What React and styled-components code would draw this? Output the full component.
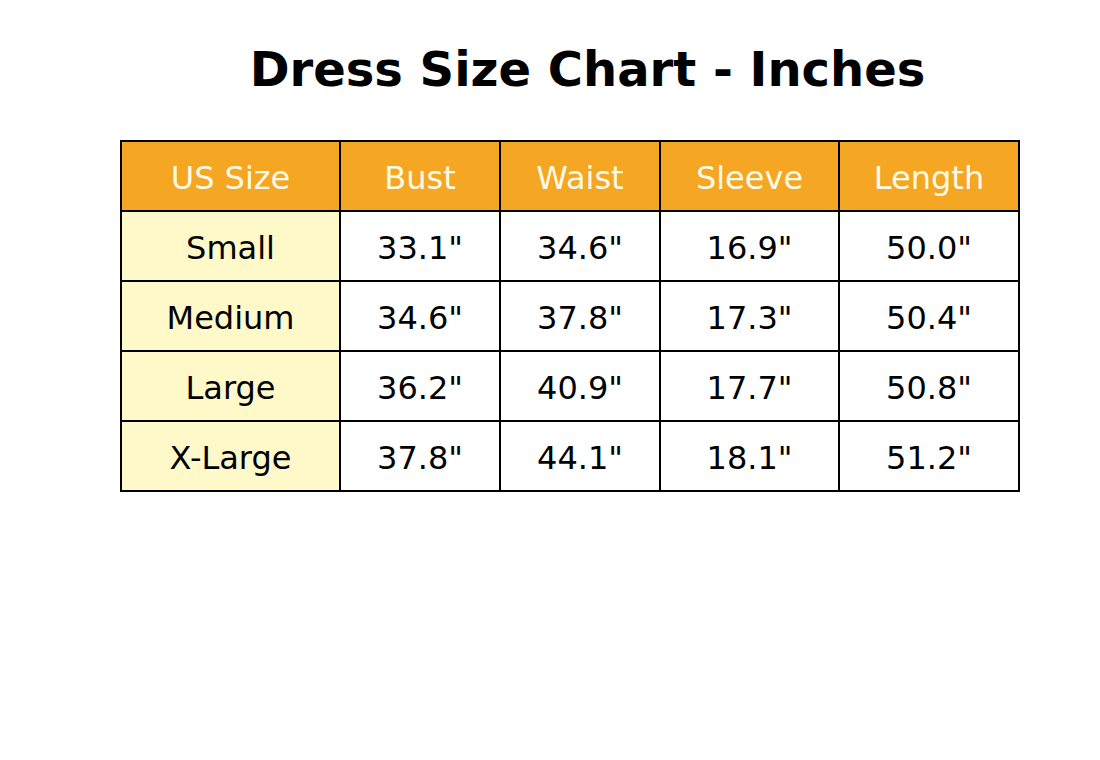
import React from "react";
import styled, { createGlobalStyle } from "styled-components";

const GlobalStyle = createGlobalStyle`
  body {
    margin: 0;
    background: #ffffff;
    font-family: "DejaVu Sans", "Liberation Sans", sans-serif;
  }
`;

const Page = styled.div`
  width: 1100px;
  height: 760px;
  display: flex;
  flex-direction: column;
`;

const Title = styled.h1`
  margin: 45px 0 0 75px;
  font-size: 48px;
  line-height: 1;
  font-weight: bold;
  text-align: center;
  color: #000;
`;

const Table = styled.div`
  margin: 47px 0 0 120px;
  display: grid;
  grid-template-columns: 219px 160px 160px 179px 180px;
  grid-auto-rows: 70px;
  width: max-content;
  border-left: 2px solid #000;
  border-top: 2px solid #000;
`;

const Cell = styled.div`
  box-sizing: border-box;
  display: flex;
  align-items: center;
  justify-content: center;
  padding-top: 3px;
  border-right: 2px solid #000;
  border-bottom: 2px solid #000;
  font-size: 32px;
  background: ${(p) => (p.$head ? "#f5a623" : p.$label ? "#fff9c9" : "#ffffff")};
  color: ${(p) => (p.$head ? "#fffbe8" : "#000000")};
`;

const headers = ["US Size", "Bust", "Waist", "Sleeve", "Length"];
const rows = [
  ["Small", '33.1"', '34.6"', '16.9"', '50.0"'],
  ["Medium", '34.6"', '37.8"', '17.3"', '50.4"'],
  ["Large", '36.2"', '40.9"', '17.7"', '50.8"'],
  ["X-Large", '37.8"', '44.1"', '18.1"', '51.2"'],
];

export default function App() {
  return (
    <Page>
      <GlobalStyle />
      <Title>Dress Size Chart - Inches</Title>
      <Table>
        {headers.map((h) => (
          <Cell key={h} $head>
            {h}
          </Cell>
        ))}
        {rows.map((row) =>
          row.map((v, i) => (
            <Cell key={row[0] + i} $label={i === 0}>
              {v}
            </Cell>
          ))
        )}
      </Table>
    </Page>
  );
}
